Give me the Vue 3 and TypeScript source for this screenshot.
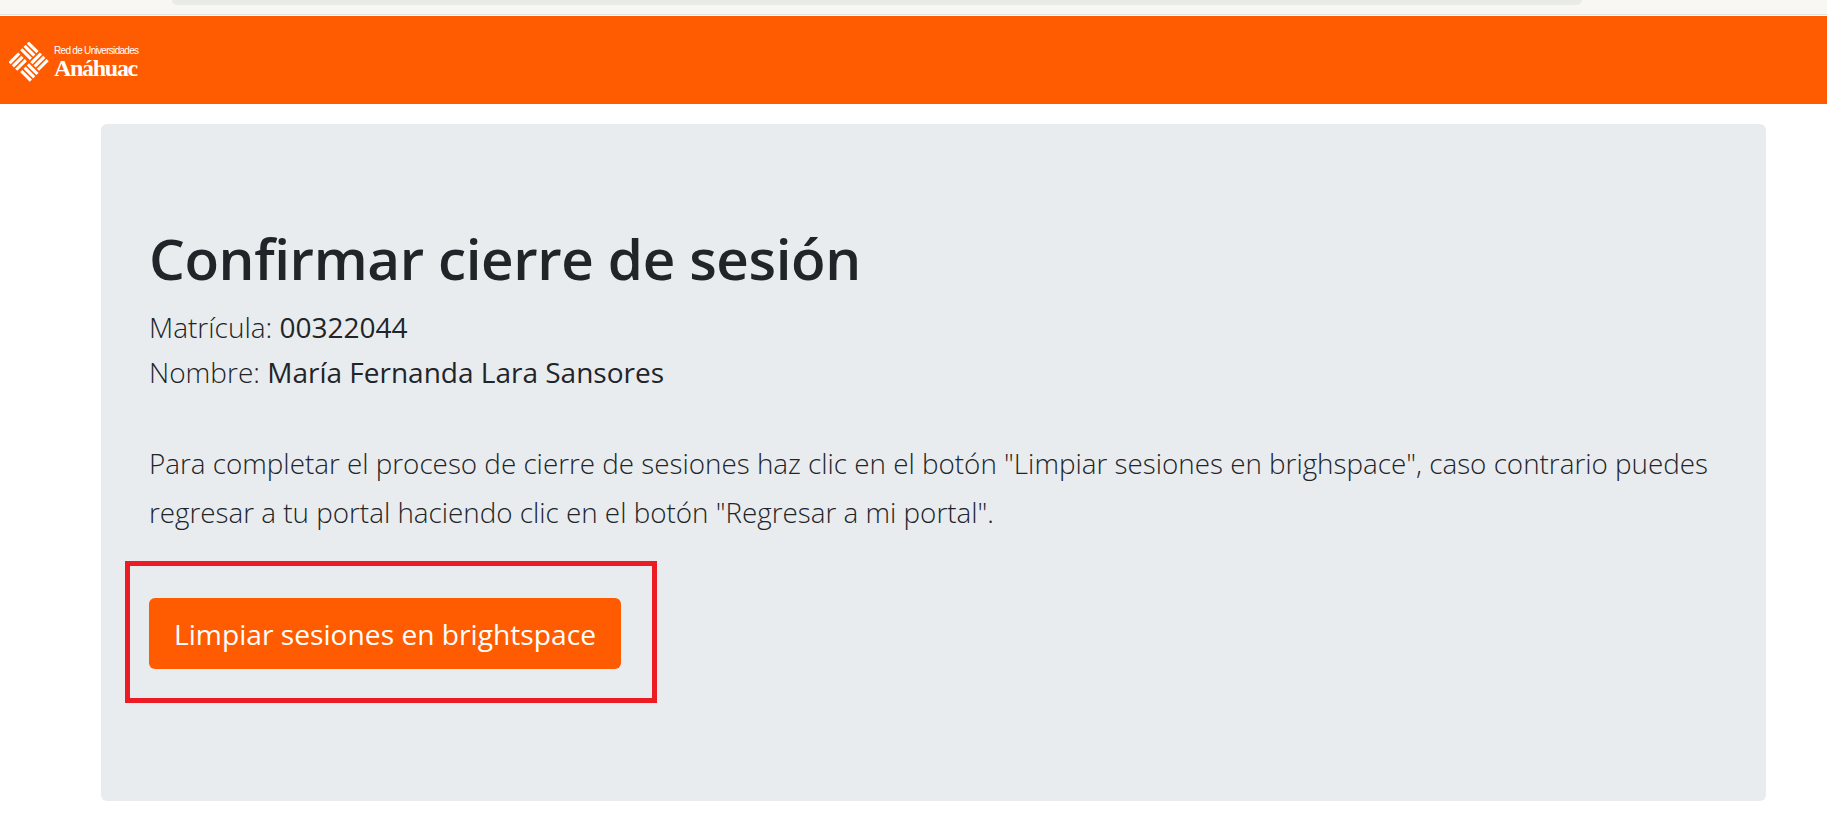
<script setup lang="ts">
const matricula = '00322044'
const nombre = 'María Fernanda Lara Sansores'
</script>

<template>
  <div class="page">
    <div class="browser-strip">
      <div class="address-pill"></div>
    </div>
    <header class="brand-bar">
      <div class="logo">
        <svg class="logo-mark" viewBox="0 0 40 40" width="40" height="40">
          <g fill="#fff" transform="rotate(45 20 20)">
            <rect x="5.5" y="5.5" width="13.6" height="3.1" />
            <rect x="5.5" y="10.2" width="13.6" height="3.1" />
            <rect x="5.5" y="14.9" width="13.6" height="3.1" />
            <rect x="20.9" y="5.5" width="3.1" height="13.6" />
            <rect x="25.6" y="5.5" width="3.1" height="13.6" />
            <rect x="30.3" y="5.5" width="3.1" height="13.6" />
            <rect x="20.9" y="20.9" width="13.6" height="3.1" />
            <rect x="20.9" y="25.6" width="13.6" height="3.1" />
            <rect x="20.9" y="30.3" width="13.6" height="3.1" />
            <rect x="5.5" y="20.9" width="3.1" height="13.6" />
            <rect x="10.2" y="20.9" width="3.1" height="13.6" />
            <rect x="14.9" y="20.9" width="3.1" height="13.6" />
          </g>
        </svg>
        <div class="logo-text">
          <span class="logo-small">Red de Universidades</span>
          <span class="logo-big">Anáhuac</span>
        </div>
      </div>
    </header>
    <main class="content">
      <section class="card">
        <h1>Confirmar cierre de sesión</h1>
        <p class="line">Matrícula: <span class="value">{{ matricula }}</span></p>
        <p class="line">Nombre: <span class="value">{{ nombre }}</span></p>
        <p class="intro">
          Para completar el proceso de cierre de sesiones haz clic en el botón "Limpiar sesiones en brighspace", caso contrario puedes regresar a tu portal haciendo clic en el botón "Regresar a mi portal".
        </p>
        <div class="highlight">
          <button class="clear-btn" type="button">Limpiar sesiones en brightspace</button>
        </div>
      </section>
    </main>
  </div>
</template>

<style>
html, body {
  margin: 0;
  background: #fff;
}
</style>

<style scoped>
.page {
  font-family: "Open Sans", "Noto Sans", sans-serif;
  color: #212529;
  height: 829px;
  overflow: hidden;
}

.browser-strip {
  height: 14px;
  background: #f8f7f3;
  border-bottom: 1px solid #e4e2dc;
  padding-left: 172px;
  padding-right: 245px;
}

.address-pill {
  height: 5px;
  background: #e9ebe6;
  border-radius: 0 0 14px 14px;
}

.brand-bar {
  height: 88px;
  background: #ff5b00;
  display: flex;
  align-items: center;
  padding-left: 9px;
  margin-top: 1px;
}

.logo {
  display: flex;
  align-items: center;
  gap: 5px;
  color: #fff;
  margin-top: 4px;
}

.logo-mark {
  display: block;
}

.logo-text {
  display: flex;
  flex-direction: column;
}

.logo-small {
  font-family: "Liberation Sans", sans-serif;
  font-size: 10px;
  line-height: 12px;
  letter-spacing: -0.7px;
}

.logo-big {
  font-family: "Liberation Serif", serif;
  font-size: 24px;
  font-weight: 700;
  line-height: 23px;
  letter-spacing: -1.3px;
}

.content {
  padding: 20px 61px 0 101px;
}

.card {
  background: #e9ecef;
  border-radius: 6px;
  height: 677px;
  box-sizing: border-box;
  padding: 100px 56px 0 48px;
}

h1 {
  margin: 0 0 11px;
  font-size: 56.6px;
  font-weight: 600;
  line-height: 70px;
  letter-spacing: -0.4px;
}

.line {
  margin: 0;
  font-size: 28px;
  font-weight: 300;
  line-height: 45px;
}

.value {
  font-weight: 400;
}

.intro {
  margin: 44px 0 0;
  font-size: 27.8px;
  font-weight: 300;
  line-height: 49px;
}

.highlight {
  display: inline-block;
  margin: 24px 0 0 -24px;
  border: 5px solid #ed1c24;
  padding: 32px 31px 29px 19px;
}

.clear-btn {
  display: block;
  width: 472px;
  height: 71px;
  padding: 0;
  border: 0;
  border-radius: 6px;
  background: #ff5b00;
  color: #fff;
  font-family: inherit;
  font-size: 28.2px;
  font-weight: 400;
}
</style>
